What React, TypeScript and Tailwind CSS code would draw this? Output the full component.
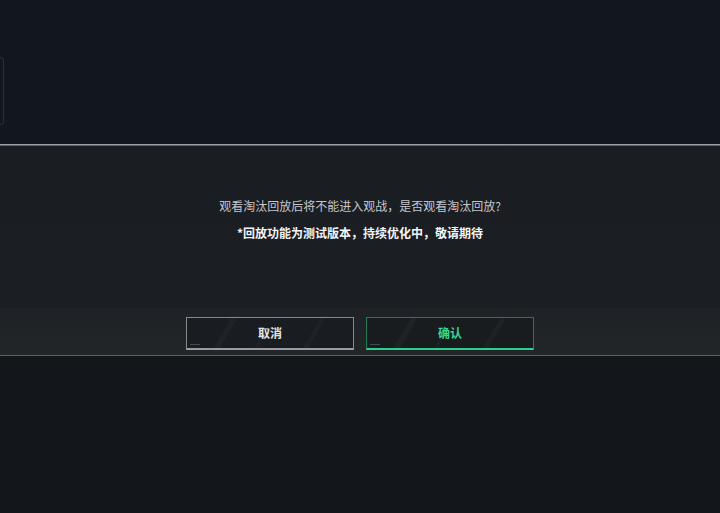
import React from "react";

const font = { fontFamily: '"Noto Sans CJK SC", "Noto Sans", sans-serif' };

function DialogButton({ label, primary }: { label: string; primary?: boolean }) {
  return (
    <button
      className={
        primary
          ? "relative w-[168px] h-[33px] border border-[#1f7c57] border-b-2 border-b-[#2ccf8b] bg-[#181c1f] text-[#37d894] text-[12px] font-bold flex items-center justify-center"
          : "relative w-[168px] h-[33px] border border-[#85888d] border-b-2 border-b-[#999ca0] bg-[#191d21] text-[#e2e4e6] text-[12px] font-bold flex items-center justify-center"
      }
    >
      {/* faint diagonal texture */}
      <svg className="absolute inset-0 w-full h-full" viewBox="0 0 168 33" preserveAspectRatio="none">
        <path d="M30 33 L48 0" stroke="#1e2327" strokeWidth="6" />
        <path d="M70 33 L82 10" stroke="#1d2226" strokeWidth="3" />
        <path d="M120 33 L138 0" stroke="#1d2226" strokeWidth="5" />
      </svg>
      <span className="absolute left-[3px] bottom-[3px] w-[10px] h-[1px] bg-[#444950]" />
      <span className="relative">{label}</span>
    </button>
  );
}

export default function App() {
  return (
    <div className="w-[720px] h-[513px] flex flex-col bg-[#13171b] overflow-hidden" style={font}>
      {/* game view behind the dialog */}
      <div className="h-[144px] bg-[#12161f] flex items-start pt-[57px]">
        <div className="w-[4px] h-[68px] border border-l-0 border-[#2b3038] rounded-r-[4px]" />
      </div>
      <div className="h-[1px] bg-[#9a9fa8]" />
      <div className="h-[1px] bg-[#5c616b]" />

      {/* dialog body */}
      <div className="h-[162px] bg-gradient-to-b from-[#1a1d22] to-[#1b1e22] flex flex-col items-center pt-[52px] gap-[11px]">
        <p className="text-[12px] leading-[16px] text-[#c3c6cb]">
          观看淘汰回放后将不能进入观战，是否观看淘汰回放?
        </p>
        <p className="text-[12px] leading-[16px] font-bold text-[#f4f5f6]">
          *回放功能为测试版本，持续优化中，敬请期待
        </p>
      </div>

      {/* dialog footer */}
      <div className="h-[47px] bg-gradient-to-b from-[#1e2125] to-[#232629] flex justify-center items-start pt-[9px] gap-[12px]">
        <DialogButton label="取消" />
        <DialogButton label="确认" primary />
      </div>
      <div className="h-[1px] bg-[#5b5f64]" />

      <div className="flex-1 bg-[#13171b]" />
    </div>
  );
}
